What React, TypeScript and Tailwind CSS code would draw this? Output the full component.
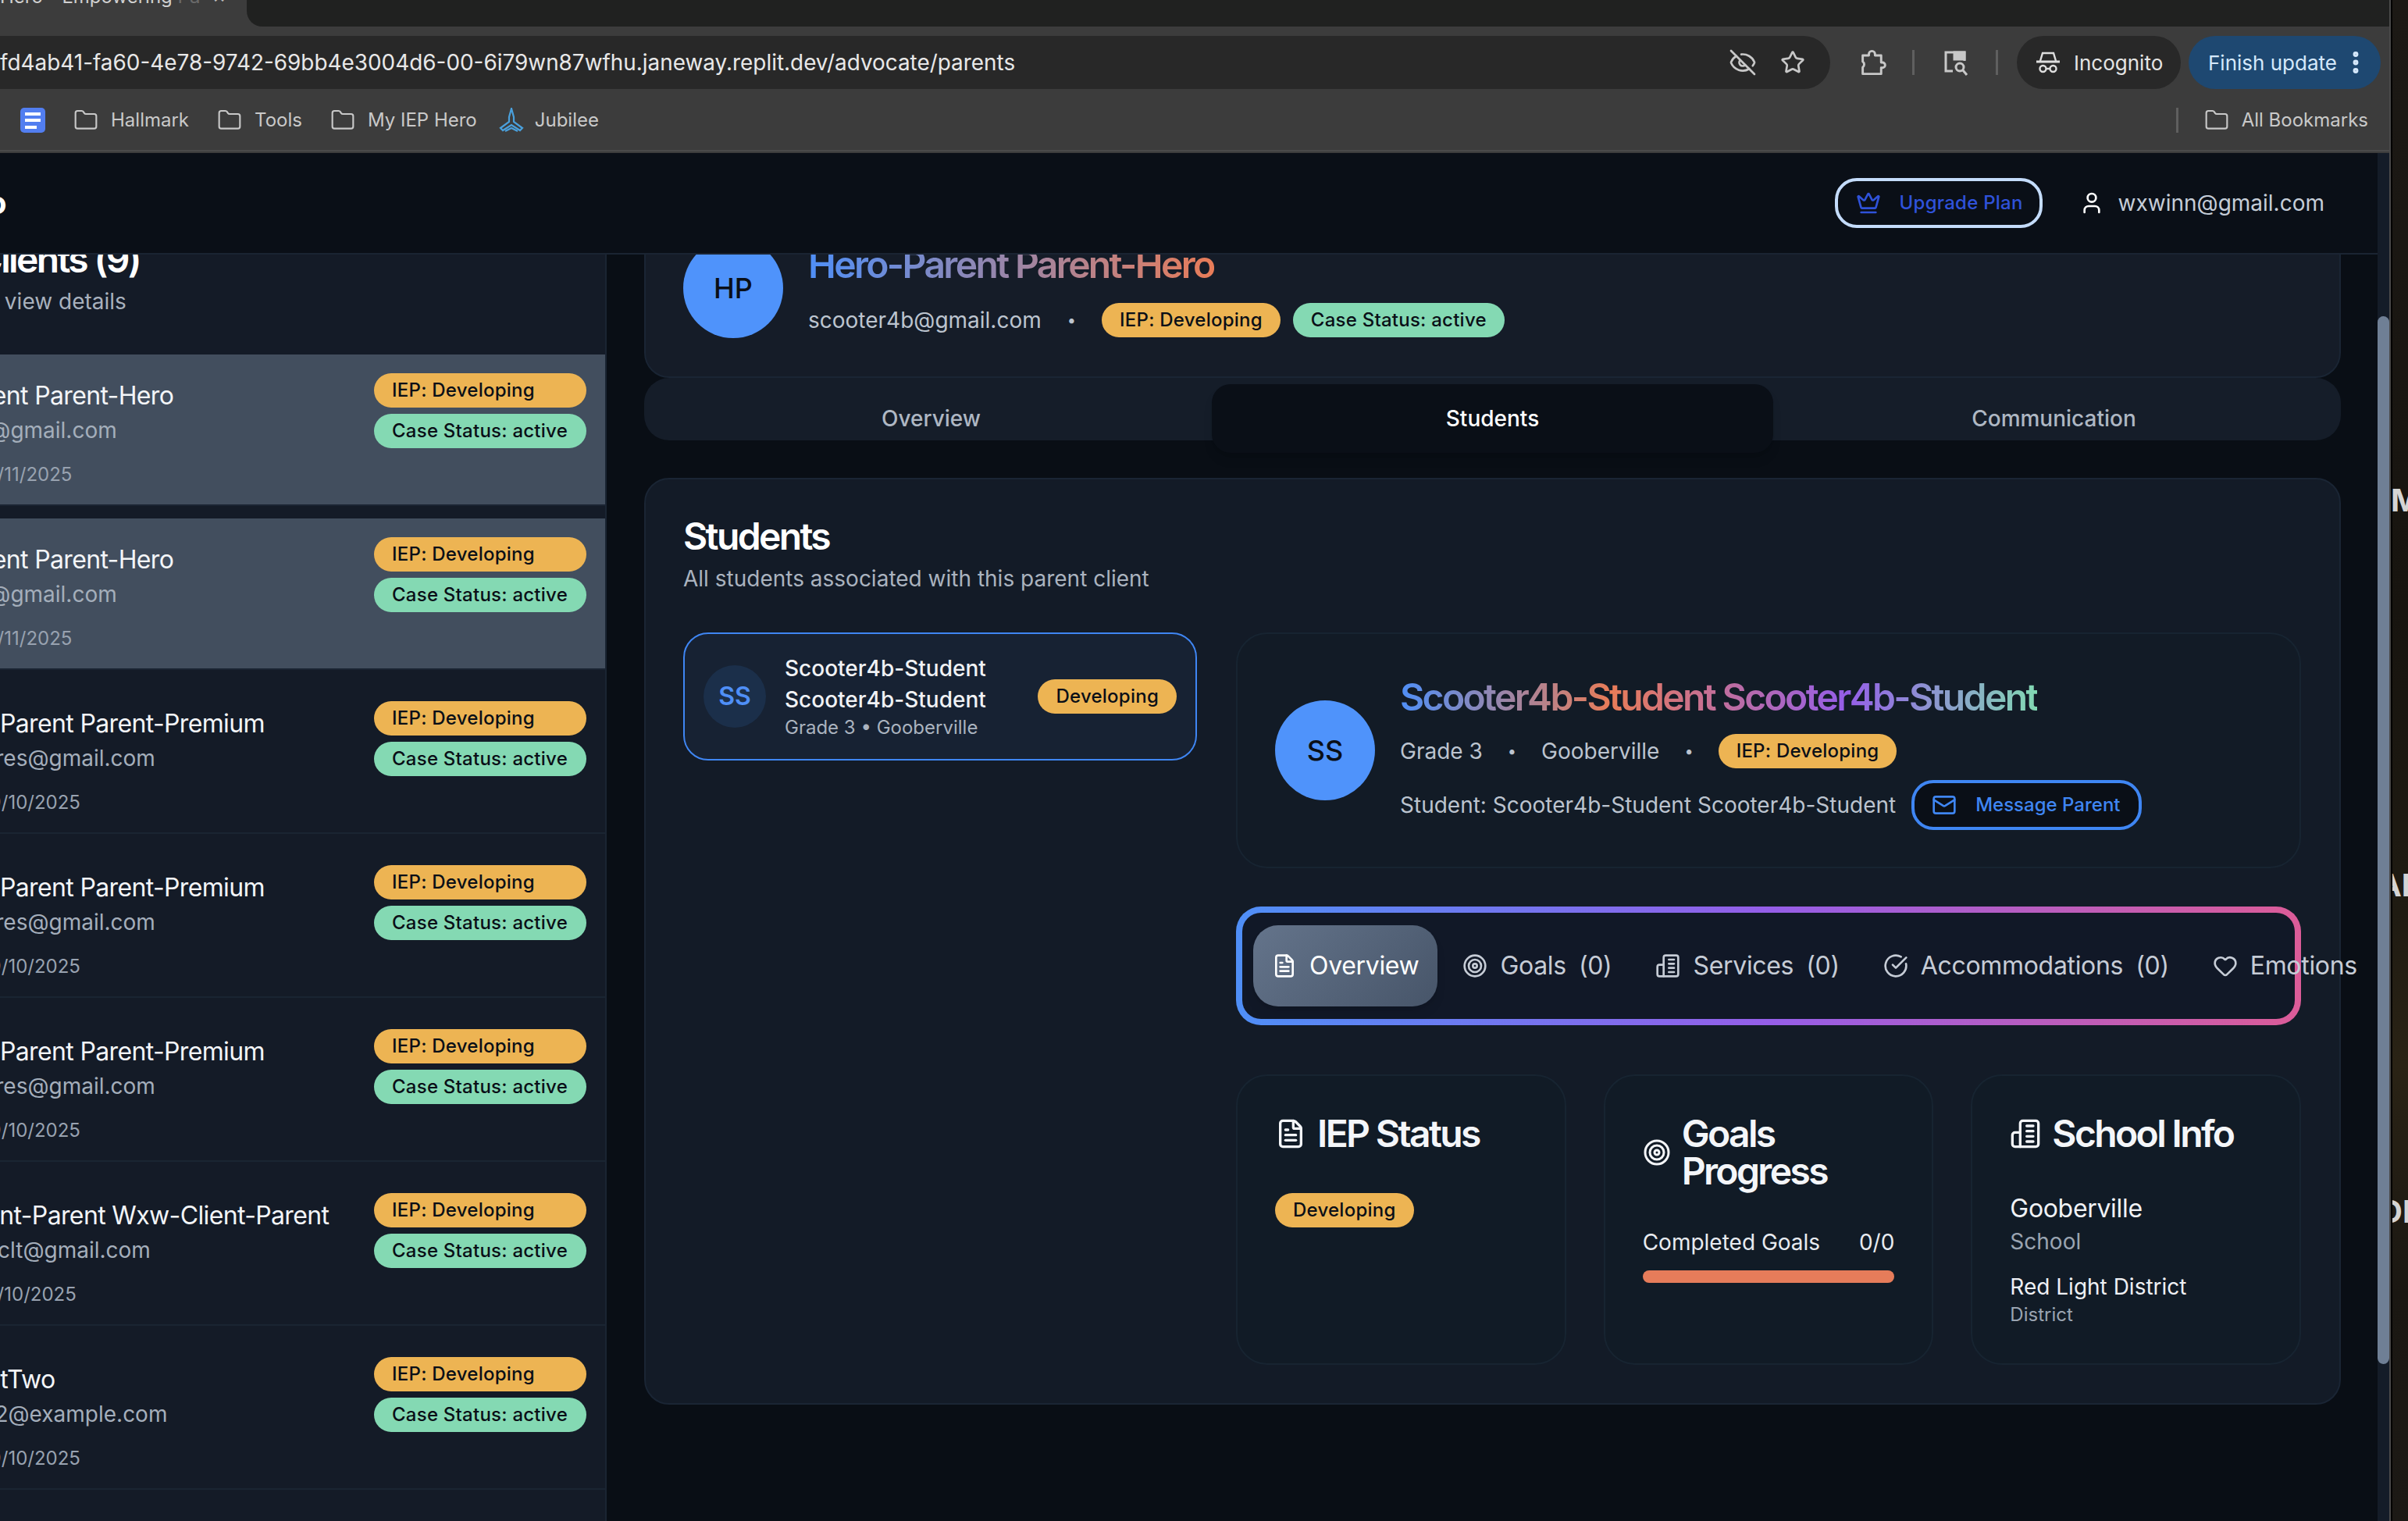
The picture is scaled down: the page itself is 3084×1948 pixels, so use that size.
import { CircleCheckBig, Crown, EyeOff, FileText, Folder, Heart, Mail, MoreVertical, Star, Target, User } from 'lucide-react';
import type { ReactNode } from 'react';

const clients = [
  { name: 'Hero-Parent Parent-Hero', email: 'scooter4b@gmail.com', date: 'Last active: 1/11/2025', active: true },
  { name: 'Hero-Parent Parent-Hero', email: 'scooter4b@gmail.com', date: 'Last active: 1/11/2025', active: true },
  { name: 'Premium-Parent Parent-Premium', email: 'wxw.prem.res@gmail.com', date: 'Last active: 9/10/2025', active: false },
  { name: 'Premium-Parent Parent-Premium', email: 'wxw.prem.res@gmail.com', date: 'Last active: 9/10/2025', active: false },
  { name: 'Premium-Parent Parent-Premium', email: 'wxw.prem.res@gmail.com', date: 'Last active: 9/10/2025', active: false },
  { name: 'Wxw-Client-Parent Wxw-Client-Parent', email: 'wxwparentclt@gmail.com', date: 'Last active: 1/10/2025', active: false },
  { name: 'Test ClientTwo', email: 'test.parent2@example.com', date: 'Last active: 9/10/2025', active: false },
  { name: 'Test ClientThree', email: 'test.parent3@example.com', date: 'Last active: 9/10/2025', active: false },
];

function Badge({ color, className, children }: { color: 'amber' | 'green'; className?: string; children: ReactNode }) {
  return (
    <span
      className={`${color === 'amber' ? 'bg-[#edb453]' : 'bg-[#84d9b3]'} flex h-11 shrink-0 items-center rounded-full px-[23px] text-[24px] font-medium tracking-[0.01em] whitespace-nowrap text-[#0a0f17] ${className ?? ''}`}
    >
      {children}
    </span>
  );
}

function SchoolIcon({ className }: { className?: string }) {
  return (
    <svg viewBox="0 0 24 24" className={className} fill="none" stroke="currentColor" strokeWidth="2" strokeLinecap="round" strokeLinejoin="round">
      <path d="M8 22V4a2 2 0 0 1 2-2h10a2 2 0 0 1 2 2v16a2 2 0 0 1-2 2z" />
      <path d="M8 11H4a2 2 0 0 0-2 2v7a2 2 0 0 0 2 2h4" />
      <path d="M13 6h5M13 10h5M13 14h5M13 18h5" />
    </svg>
  );
}

function Bookmark({ label }: { label: string }) {
  return (
    <div className="flex items-center gap-4">
      <Folder className="h-8 w-8 text-[#c8c8c8]" strokeWidth={1.6} />
      <span>{label}</span>
    </div>
  );
}

function ChromeBar() {
  return (
    <div className="h-[196px] shrink-0 bg-[#3c3c3c] text-[#c9c9c9]">
      <div className="relative h-[34px] overflow-hidden">
        <span className="absolute -top-[22px] left-0 text-[24px] whitespace-nowrap text-[#d0d0d0]">Hero - Empowering <span className="text-[#6a6a6a]">Pa</span></span>
        <span className="absolute -top-[26px] left-[272px] text-[26px] text-[#c0c0c0]">×</span>
        <div className="absolute top-0 right-0 left-[316px] h-[34px] rounded-bl-[20px] bg-[#202120]">
          <span className="absolute -top-[38px] left-[26px] text-[36px] text-[#c0c0c0]">+</span>
        </div>
      </div>
      <div className="flex h-[80px] items-start pt-3 pr-[11px] pl-0">
        <div className="flex h-[68px] w-[2344px] shrink-0 items-center justify-between rounded-r-full bg-[#282828] pr-[32px]">
          <span className="pt-[2px] text-[27.9px] whitespace-nowrap text-[#e8e8e8]">fd4ab41-fa60-4e78-9742-69bb4e3004d6-00-6i79wn87wfhu.janeway.replit.dev/advocate/parents</span>
          <div className="flex items-center gap-[30px]">
            <EyeOff className="h-9 w-9 text-[#c8c8c8]" strokeWidth={1.8} />
            <Star className="h-8 w-8 text-[#c8c8c8]" strokeWidth={2} />
          </div>
        </div>
        <div className="flex h-[68px] items-center pl-[36px]">
          <svg viewBox="0 0 32 32" className="h-9 w-9 text-[#c8c8c8]" fill="none" stroke="currentColor" strokeWidth="2.6" strokeLinejoin="round">
            <path d="M5 8h7V6.5a3.5 3.5 0 0 1 7 0V8h7v8h1.5a3 3 0 0 1 0 6H26v7H5v-7.5a4 4 0 0 0 0-6.5z" />
          </svg>
          <div className="ml-[33px] h-8 w-[3px] bg-[#5f5f5f]" />
          <svg viewBox="0 0 36 36" className="ml-[34px] h-9 w-9 text-[#c8c8c8]" fill="none" stroke="currentColor" strokeWidth="3">
            <path d="M15 29H6V5h24v11" />
            <path d="M17 5h13v9H17z" fill="currentColor" />
            <circle cx="24" cy="24" r="5" />
            <path d="m28 28 5 6" />
          </svg>
          <div className="ml-[34px] h-8 w-[3px] bg-[#5f5f5f]" />
        </div>
        <div className="ml-[24px] flex h-[68px] w-[210px] shrink-0 items-center gap-[17px] rounded-full bg-[#282828] pl-[24px] text-[26px] text-[#e4e4e4]">
          <svg viewBox="0 0 32 32" className="h-8 w-8 text-[#dedede]" fill="none" stroke="currentColor" strokeWidth="2.4">
            <path d="M6 14 9 4h14l3 10" />
            <path d="M1 15h30" strokeWidth="3" />
            <circle cx="9.5" cy="24" r="4" />
            <circle cx="22.5" cy="24" r="4" />
            <path d="M13 24h6" />
          </svg>
          <span>Incognito</span>
        </div>
        <div className="ml-[10px] flex h-[68px] flex-1 items-center rounded-full bg-[#1e4871] pl-[25px] text-[26px] text-[#d5e8fb]">
          <span>Finish update</span>
          <MoreVertical className="ml-[6px] h-9 w-9" strokeWidth={2.6} />
        </div>
      </div>
      <div className="flex h-[80px] items-center border-b-2 border-[#4b4b4b] pt-[2px] pr-[27px] pl-[26px] text-[24px]">
        <svg viewBox="0 0 32 32" className="h-8 w-8">
          <rect width="32" height="32" rx="5" fill="#527ef0" />
          <path d="M6 6h20v4H6zM6 14h20v4H6zM6 23h15v4H6z" fill="#fff" />
        </svg>
        <div className="ml-9 flex items-center gap-9">
          <Bookmark label="Hallmark" />
          <Bookmark label="Tools" />
          <Bookmark label="My IEP Hero" />
          <div className="-ml-2 flex items-center gap-[14px]">
            <svg viewBox="0 0 32 32" className="h-8 w-8" fill="none" stroke="#4aa0dc" strokeWidth="2.2">
              <path d="M16 1 13 12v6l-11 8 3 3 11-7 11 7 3-3-11-8v-6z" />
              <path d="m8 30 8-4 8 4" />
            </svg>
            <span>Jubilee</span>
          </div>
        </div>
        <div className="ml-auto flex items-center gap-[33px]">
          <div className="h-8 w-[3px] bg-[#5f5f5f]" />
          <Bookmark label="All Bookmarks" />
        </div>
      </div>
    </div>
  );
}

function AppHeader() {
  return (
    <header className="flex h-[130px] shrink-0 items-center border-b-2 border-[#1a2432] bg-[#0a0f17] pr-[68px]">
      <span className="-ml-[156px] text-[40px] font-bold whitespace-nowrap text-white">IEP Hero</span>
      <div className="ml-auto flex items-center gap-[47px]">
        <button className="flex h-16 w-[266px] items-center gap-6 rounded-[28px] border-4 border-[#c4dcfb] pl-[23px] text-[24px] font-medium tracking-[0.01em] text-[#2f52d9]">
          <Crown className="h-8 w-8" strokeWidth={2} />
          Upgrade Plan
        </button>
        <div className="flex items-center gap-[18px] text-[28px] text-[#c5cdd8]">
          <User className="h-8 w-8 text-white" strokeWidth={2} />
          wxwinn@gmail.com
        </div>
      </div>
    </header>
  );
}

function ClientRow({ name, email, date, active }: { name: string; email: string; date: string; active: boolean }) {
  return (
    <div className={`mb-4 flex h-[194px] justify-between border-b-2 p-6 ${active ? 'border-[#1a2432] bg-[#424e5e]' : 'border-[#1a2532]'}`}>
      <div className="whitespace-nowrap">
        <div className="ml-[6px] h-[54px] text-[32px] leading-[58px] tracking-[-0.02em] text-[#f3f5f8]">{name}</div>
        <div className="h-[38px] text-[28px] leading-[38px] text-[#a4aebb]">{email}</div>
        <div className="mt-[22px] h-[32px] text-[24px] leading-[32px] text-[#98a2b0]">{date}</div>
      </div>
      <div className="flex w-[272px] shrink-0 flex-col gap-2">
        <Badge color="amber">IEP: Developing</Badge>
        <Badge color="green">Case Status: active</Badge>
      </div>
    </div>
  );
}

function Sidebar() {
  return (
    <aside className="h-full w-[950px] shrink-0 overflow-hidden border-r-2 border-[#1a2432] bg-[#141b27]">
      <div className="-mt-[24px] h-[152px] pl-6 whitespace-nowrap">
        <div className="-ml-[27px] text-[48px] leading-[60px] font-semibold tracking-[-0.055em] text-white">Parent Clients (9)</div>
        <div className="mt-1 -ml-[55px] text-[28px] leading-[40px] text-[#a8b1bd]">Click a client to view details</div>
      </div>
      {clients.map((c, i) => (
        <ClientRow key={i} {...c} />
      ))}
    </aside>
  );
}

function ParentCard() {
  return (
    <div className="-mt-[67px] flex gap-8 rounded-b-[32px] border-2 border-[#1a2534] bg-[#151c28] px-12 pt-[44px] pb-[49px]">
      <div className="flex h-32 w-32 items-center justify-center rounded-full bg-[#4f93fb] text-[36px] font-medium text-[#0a0f17]">HP</div>
      <div>
        <h1 className="mt-[4px] w-fit bg-[linear-gradient(90deg,#4f8ff7,#e87c58)] bg-clip-text text-[48px] leading-[60px] font-semibold tracking-[-0.055em] text-transparent">Hero-Parent Parent-Hero</h1>
        <div className="mt-[19px] flex items-center text-[28px] text-[#bcc4cf]">
          <span>scooter4b@gmail.com</span>
          <span className="mx-[33px] text-[20px]">•</span>
          <Badge color="amber">IEP: Developing</Badge>
          <Badge color="green" className="ml-4">Case Status: active</Badge>
        </div>
      </div>
    </div>
  );
}

function SectionTabs() {
  return (
    <div className="grid h-20 grid-cols-3 items-start rounded-[32px] bg-[#151d29] px-2 pt-2 text-[28px] font-medium">
      <div className="flex h-[88px] items-center justify-center text-[#aeb7c3]">Overview</div>
      <div className="flex h-[88px] items-center justify-center rounded-[24px] bg-[#0a0f17] text-white shadow-lg">Students</div>
      <div className="flex h-[88px] items-center justify-center text-[#aeb7c3]">Communication</div>
    </div>
  );
}

function StudentDetail() {
  return (
    <div className="flex h-[302px] items-center gap-8 rounded-[40px] border-2 border-[#172431] bg-[#121b26] px-12">
      <div className="flex h-32 w-32 shrink-0 items-center justify-center rounded-full bg-[#4f93fb] text-[36px] font-medium text-[#0a0f17]">SS</div>
      <div className="flex flex-col items-start pt-1">
        <h2 className="w-fit bg-[linear-gradient(90deg,#4f8ff7,#e87c58_33%,#955ee8_70%,#82d9b3)] bg-clip-text text-[48px] leading-[60px] font-semibold tracking-[-0.055em] text-transparent">Scooter4b-Student Scooter4b-Student</h2>
        <div className="mt-[17px] flex h-11 items-center text-[28px] text-[#bcc4cf]">
          <span>Grade 3</span>
          <span className="mx-[32px] text-[20px]">•</span>
          <span>Gooberville</span>
          <span className="mx-[32px] text-[20px]">•</span>
          <Badge color="amber">IEP: Developing</Badge>
        </div>
        <div className="mt-[15px] flex h-16 items-center text-[28px] text-[#bcc4cf]">
          <span>Student: Scooter4b-Student Scooter4b-Student</span>
          <button className="ml-5 flex h-16 w-[295px] items-center gap-6 rounded-[28px] border-4 border-[#3f86f3] bg-[#0a0f17] pl-[22px] text-[24px] font-medium text-[#3f86f3]">
            <Mail className="h-8 w-8" strokeWidth={2} />
            Message Parent
          </button>
        </div>
      </div>
    </div>
  );
}

const studentTabs = [
  { label: 'Goals', count: '(0)', Icon: Target },
  { label: 'Services', count: '(0)', Icon: SchoolIcon },
  { label: 'Accommodations', count: '(0)', Icon: CircleCheckBig },
  { label: 'Emotions', count: '', Icon: Heart },
];

function StudentTabs() {
  return (
    <div className="mt-[49px] h-[152px] rounded-[32px] bg-[linear-gradient(90deg,#4f8ff7,#955ee8_50%,#dc5c98)] p-2">
      <div className="flex h-full items-center gap-2 rounded-[24px] bg-[#111827] pl-[14px] text-[32px] tracking-[-0.01em] whitespace-nowrap">
        <div className="flex h-[104px] items-center gap-4 rounded-[32px] bg-[linear-gradient(135deg,#64748b,#475569)] px-6 text-white shadow-lg">
          <FileText className="h-8 w-8" strokeWidth={2} />
          Overview
        </div>
        {studentTabs.map(({ label, count, Icon }) => (
          <div key={label} className="flex h-[104px] shrink-0 items-center gap-4 px-6 text-[#c6ccd6]">
            <Icon className="h-8 w-8" />
            <span>{label}</span>
            {count && <span>{count}</span>}
          </div>
        ))}
      </div>
    </div>
  );
}

function InfoCard({ children }: { children: ReactNode }) {
  return <div className="h-[372px] rounded-[40px] border-2 border-[#172431] bg-[#111b26] px-12 pt-[50px]">{children}</div>;
}

function CardTitle({ icon, children }: { icon: ReactNode; children: ReactNode }) {
  return (
    <div className="flex items-center gap-[14px] text-[48px] leading-[48px] font-semibold tracking-[-0.055em] text-[#f4f6f9]">
      {icon}
      <span>{children}</span>
    </div>
  );
}

function InfoCards() {
  return (
    <div className="mt-[63px] grid grid-cols-3 gap-12">
      <InfoCard>
        <CardTitle icon={<FileText className="h-10 w-10 shrink-0" strokeWidth={2} />}>IEP Status</CardTitle>
        <div className="mt-[52px] flex">
          <Badge color="amber">Developing</Badge>
        </div>
      </InfoCard>
      <InfoCard>
        <CardTitle icon={<Target className="h-9 w-9 shrink-0" strokeWidth={2} />}>Goals Progress</CardTitle>
        <div className="mt-[47px] flex justify-between text-[28px] leading-[40px] text-[#e8ebf0]">
          <span>Completed Goals</span>
          <span>0/0</span>
        </div>
        <div className="mt-4 h-4 rounded-full bg-[#e67c5a]" />
      </InfoCard>
      <InfoCard>
        <CardTitle icon={<SchoolIcon className="h-10 w-10 shrink-0" />}>School Info</CardTitle>
        <div className="mt-[50px] text-[32px] leading-[44px] tracking-[-0.01em] text-[#f0f2f5]">Gooberville</div>
        <div className="text-[28px] leading-[40px] text-[#9aa4b1]">School</div>
        <div className="mt-[18px] text-[28px] leading-[40px] text-[#eef0f4]">Red Light District</div>
        <div className="text-[24px] leading-[32px] text-[#9aa4b1]">District</div>
      </InfoCard>
    </div>
  );
}

function StudentsCard() {
  return (
    <div className="mt-12 h-[1187px] rounded-[32px] border-2 border-[#1a2534] bg-[#131b27] px-12 pt-[49px]">
      <h2 className="text-[48px] leading-[48px] font-semibold tracking-[-0.055em] text-white">Students</h2>
      <p className="mt-[10px] text-[28px] leading-[40px] text-[#aab3bf]">All students associated with this parent client</p>
      <div className="mt-[49px] grid grid-cols-[658px_1364px] gap-[50px]">
        <div className="flex h-[164px] items-center rounded-[32px] border-2 border-[#3f86f3] bg-[#172233] pr-6 pl-6">
          <div className="flex h-20 w-20 shrink-0 items-center justify-center rounded-full bg-[#1b2f4a] text-[32px] font-semibold text-[#4f8ff7]">SS</div>
          <div className="ml-6 w-[330px]">
            <div className="text-[28px] leading-[40px] font-medium text-[#f0f2f5]">Scooter4b-Student Scooter4b-Student</div>
            <div className="text-[24px] leading-[32px] text-[#aab3bf]">Grade 3 • Gooberville</div>
          </div>
          <Badge color="amber" className="ml-auto">Developing</Badge>
        </div>
        <div>
          <StudentDetail />
          <StudentTabs />
          <InfoCards />
        </div>
      </div>
    </div>
  );
}

export default function App() {
  return (
    <div className="flex h-[1948px] w-[3084px] overflow-hidden [font-family:Inter,sans-serif]">
      <div className="flex h-full w-[3062px] shrink-0 flex-col overflow-hidden border-r-2 border-[#4a4a4a]">
        <ChromeBar />
        <div className="flex min-h-0 flex-1 flex-col overflow-hidden">
          <div className="flex h-full">
            <div className="flex min-w-0 flex-1 flex-col overflow-hidden">
              <AppHeader />
              <div className="flex min-h-0 flex-1 overflow-hidden bg-[#090e15]">
                <div className="-ml-[173px] h-full shrink-0">
                  <Sidebar />
                </div>
                <main className="ml-12 w-[2173px] shrink-0">
                  <ParentCard />
                  <SectionTabs />
                  <StudentsCard />
                </main>
              </div>
            </div>
            <div className="relative h-full w-[15px] shrink-0 bg-[#141c28]">
              <div className="absolute top-[209px] h-[1342px] w-full rounded-full bg-[#6f7f95]" />
            </div>
          </div>
        </div>
      </div>
      <div className="relative flex-1 overflow-hidden border-l-2 border-black bg-[linear-gradient(180deg,#1c1915,#17140f_40%,#1f1b12_60%,#2a2315_70%,#1a1712_85%,#1c1915)] text-[40px] font-bold text-[#d4d4d4]">
        <span className="absolute top-[611px] left-[-2px]">M</span>
        <span className="absolute top-[1104px] left-[-18px]">AN</span>
        <span className="absolute top-[1522px] left-[-16px]">DI</span>
      </div>
    </div>
  );
}
